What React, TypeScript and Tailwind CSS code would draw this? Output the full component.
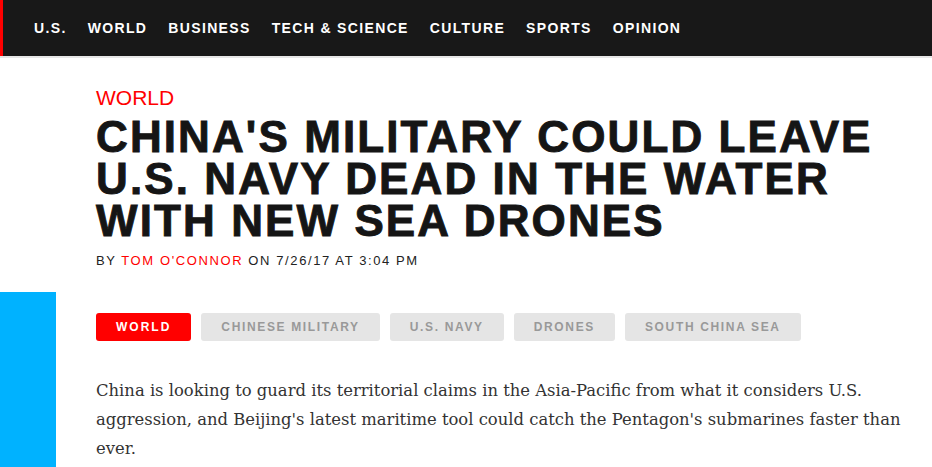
import React from "react";

const navItems = ["U.S.", "WORLD", "BUSINESS", "TECH & SCIENCE", "CULTURE", "SPORTS", "OPINION"];
const tags = ["CHINESE MILITARY", "U.S. NAVY", "DRONES", "SOUTH CHINA SEA"];

export default function App() {
  return (
    <div className="w-[932px] h-[467px] overflow-hidden bg-white font-['Liberation_Sans',Arial,sans-serif]">
      <header className="h-[56px] bg-[#181818] border-l-[3px] border-[#ff0000] flex items-center pl-[31px] gap-[21px]">
        {navItems.map((n) => (
          <a key={n} className="text-white text-[14px] font-bold tracking-[1.35px] leading-none mb-[1px]">
            {n}
          </a>
        ))}
      </header>
      <div className="h-[2px] bg-[#e6e6e6]" />

      <div className="flex">
        <div className="w-[56px] shrink-0 flex flex-col">
          <div className="h-[234px]" />
          <div className="h-[200px] bg-[#00b2ff]" />
        </div>
        <main className="pl-[40px] pr-[20px] pt-[28px]">
          <div className="text-[#ff0000] text-[21px] leading-[24px]">WORLD</div>
          <h1 className="mt-[6px] text-[#151515] text-[44px] leading-[42px] font-bold tracking-[2.1px] [-webkit-text-stroke:0.9px_#151515]">
            CHINA'S MILITARY COULD LEAVE
            <br />
            U.S. NAVY DEAD IN THE WATER
            <br />
            WITH NEW SEA DRONES
          </h1>
          <div className="mt-[11px] text-[13px] tracking-[1.6px] text-[#222] leading-[16px]">
            BY <span className="text-[#ff0000]">TOM O'CONNOR</span> ON 7/26/17 AT 3:04 PM
          </div>
          <div className="mt-[44px] flex gap-[10px]">
            <span className="h-[28px] px-[20px] rounded-[3px] bg-[#ff0000] text-white text-[12px] font-bold tracking-[2px] flex items-center">
              WORLD
            </span>
            {tags.map((t) => (
              <span
                key={t}
                className="h-[28px] px-[20px] rounded-[3px] bg-[#e5e5e5] text-[#999] text-[12px] font-bold tracking-[1.65px] flex items-center"
              >
                {t}
              </span>
            ))}
          </div>
          <p className="mt-[35px] font-['DejaVu_Serif',Georgia,serif] text-[16.4px] leading-[29px] text-[#333] w-[830px]">
            China is looking to guard its territorial claims in the Asia-Pacific from what it considers U.S.
            aggression, and Beijing's latest maritime tool could catch the Pentagon's submarines faster than
            ever.
          </p>
        </main>
      </div>
    </div>
  );
}
